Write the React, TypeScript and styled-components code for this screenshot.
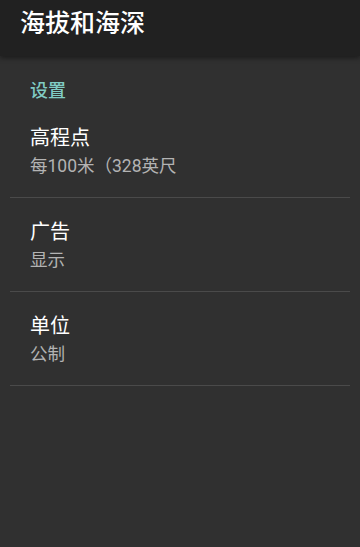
import React from "react";
import styled, { createGlobalStyle } from "styled-components";

const GlobalStyle = createGlobalStyle`
  html, body {
    margin: 0;
    padding: 0;
    background: #303030;
  }
  body {
    font-family: Roboto, "Noto Sans CJK SC", "Noto Sans", sans-serif;
    -webkit-font-smoothing: antialiased;
  }
`;

const Screen = styled.div`
  width: 360px;
  height: 547px;
  background: #303030;
  display: flex;
  flex-direction: column;
  overflow: hidden;
`;

const Toolbar = styled.header`
  height: 56px;
  flex: none;
  background: #212121;
  display: flex;
  align-items: center;
  padding: 0 0 0 20px;
  box-shadow: 0 2px 5px rgba(0, 0, 0, 0.45);
  position: relative;
  z-index: 1;
`;

const ToolbarTitle = styled.h1`
  margin: 0;
  margin-top: -9px;
  font-size: 25px;
  font-weight: 500;
  color: #ffffff;
  line-height: 28px;
`;

const List = styled.div`
  display: flex;
  flex-direction: column;
  margin: 0 10px;
`;

const SectionHeader = styled.div`
  padding: 24px 0 2px 20px;
  font-size: 18px;
  line-height: 22px;
  font-weight: 500;
  color: #80cbc4;
`;

const Row = styled.div`
  padding: 21px 0 18px 20px;
  border-bottom: 1px solid #4a4a4a;
  display: flex;
  flex-direction: column;
`;

const RowTitle = styled.div`
  font-size: 20px;
  line-height: 26px;
  color: #ffffff;
  margin-bottom: 2px;
`;

const RowSummary = styled.div`
  font-size: 17.5px;
  line-height: 26px;
  color: #b3b3b3;
`;

const prefs = [
  { title: "高程点", summary: "每100米（328英尺" },
  { title: "广告", summary: "显示" },
  { title: "单位", summary: "公制" },
];

export default function App() {
  return (
    <>
      <GlobalStyle />
      <Screen>
        <Toolbar>
          <ToolbarTitle>海拔和海深</ToolbarTitle>
        </Toolbar>
        <List>
          <SectionHeader>设置</SectionHeader>
          {prefs.map((p) => (
            <Row key={p.title}>
              <RowTitle>{p.title}</RowTitle>
              <RowSummary>{p.summary}</RowSummary>
            </Row>
          ))}
        </List>
      </Screen>
    </>
  );
}
